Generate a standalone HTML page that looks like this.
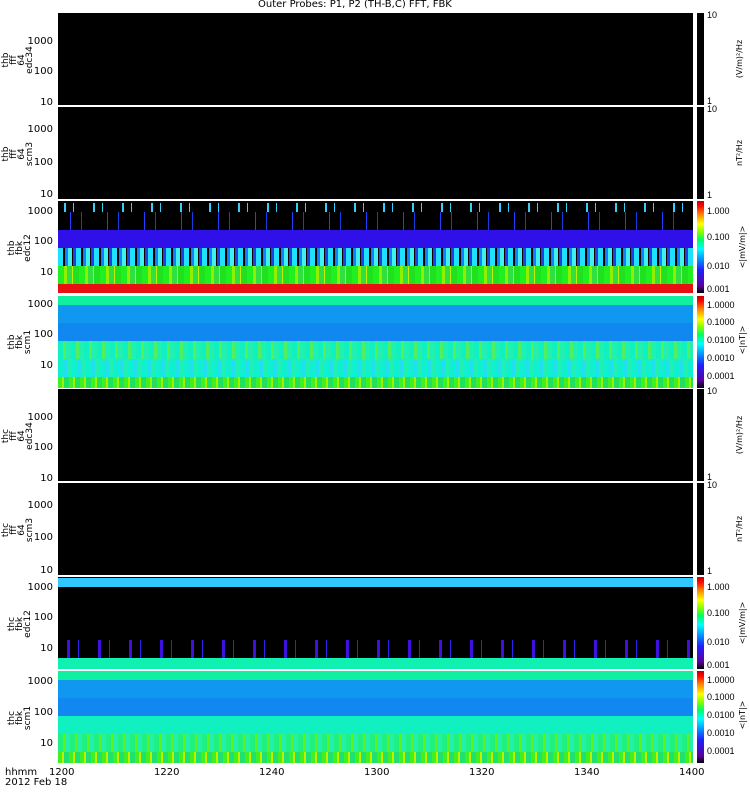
<!DOCTYPE html>
<html><head><meta charset="utf-8"><style>
body{margin:0;width:750px;height:800px;background:#fff;position:relative;overflow:hidden;font-family:"DejaVu Sans","Liberation Sans",sans-serif;font-size:10px;color:#000}
.p{position:absolute;left:58px;width:635px;height:92px;background:#000;overflow:hidden}
.b{position:absolute;left:0;width:100%}
.cb{position:absolute;left:697px;width:7px;height:92px;background:#000}
.g{background:linear-gradient(to top,#000 0%,#5a00a0 8%,#2020ff 25%,#00a0ff 38%,#00ffff 48%,#00ff60 58%,#80ff00 66%,#ffff00 75%,#ff8000 86%,#ff0000 95%,#c00000 100%)}
.t{position:absolute;font-size:10px;line-height:10px}
.yl{position:absolute;text-align:right;width:50px;left:3px;font-size:10px;line-height:10px}
.rl{position:absolute;transform:rotate(-90deg);transform-origin:left top;font-size:9px;line-height:8px;text-align:center;width:80px}
.ul{position:absolute;transform:rotate(-90deg);transform-origin:left top;font-size:8px;line-height:9px;width:92px;text-align:center}
.cl{position:absolute;left:707px;font-family:"Liberation Sans",sans-serif;font-size:9px;line-height:9px}
</style></head><body>
<div class="t" style="left:258px;top:0">Outer Probes: P1, P2 (TH-B,C) FFT, FBK</div>

<div class="p" style="top:13px"></div>
<div class="p" style="top:107px"></div>
<div class="p" style="top:201px">
 <div class="b" style="top:2px;height:9px;background:repeating-linear-gradient(90deg,#000 0 6px,#30d0ff 6px 8px,#000 8px 15px,#30d0ff 15px 16px,#000 16px 29px)"></div>
 <div class="b" style="top:11px;height:18px;background:repeating-linear-gradient(90deg,#000 0 12px,#2040ff 12px 13px,#000 13px 23px,#1040e0 23px 24px,#000 24px 37px)"></div>
 <div class="b" style="top:29px;height:18px;background:#3010e8"></div>
 <div class="b" style="top:47px;height:18px;background:repeating-linear-gradient(90deg,#20e0ff 0 5px,#000 5px 7px,#1080ff 7px 10px,#40f0f0 10px 14px,#000 14px 15px,#2040e0 15px 18px)"></div>
 <div class="b" style="top:65px;height:18px;background:repeating-linear-gradient(90deg,#20f020 0 6px,#90f000 6px 9px,#30e040 9px 14px,#c0f000 14px 15px,#20e020 15px 21px)"></div>
 <div class="b" style="top:83px;height:9px;background:#e81010"></div>
</div>
<div class="p" style="top:296px">
 <div class="b" style="top:0;height:9px;background:#10f0a0"></div>
 <div class="b" style="top:9px;height:18px;background:#1098f0"></div>
 <div class="b" style="top:27px;height:18px;background:#1088f0"></div>
 <div class="b" style="top:45px;height:18px;background:repeating-linear-gradient(90deg,#10f0c0 0 5px,#50f060 5px 8px,#20f0b0 8px 13px)"></div>
 <div class="b" style="top:63px;height:18px;background:repeating-linear-gradient(90deg,#10f0d0 0 6px,#20e0f0 6px 9px,#20f0b0 9px 14px)"></div>
 <div class="b" style="top:81px;height:11px;background:repeating-linear-gradient(90deg,#40f020 0 4px,#a0f000 4px 6px,#20e060 6px 11px)"></div>
</div>
<div class="p" style="top:389px"></div>
<div class="p" style="top:483px"></div>
<div class="p" style="top:577px">
 <div class="b" style="top:1px;height:9px;background:#30c8ff"></div>
 <div class="b" style="top:63px;height:18px;background:repeating-linear-gradient(90deg,#000 0 9px,#4010e0 9px 12px,#000 12px 20px,#3020f0 20px 21px,#000 21px 31px)"></div>
 <div class="b" style="top:81px;height:11px;background:#10f0b0"></div>
</div>
<div class="p" style="top:671px">
 <div class="b" style="top:0;height:9px;background:#10f0a0"></div>
 <div class="b" style="top:9px;height:18px;background:#1098f0"></div>
 <div class="b" style="top:27px;height:18px;background:#1088f0"></div>
 <div class="b" style="top:45px;height:18px;background:#10f0c0"></div>
 <div class="b" style="top:63px;height:18px;background:repeating-linear-gradient(90deg,#20f080 0 5px,#60f020 5px 7px,#20f0b0 7px 12px)"></div>
 <div class="b" style="top:81px;height:11px;background:repeating-linear-gradient(90deg,#40f020 0 4px,#c0f000 4px 6px,#20e070 6px 11px)"></div>
</div>

<div class="yl" style="top:37px">1000</div><div class="yl" style="top:67px">100</div><div class="yl" style="top:98px">10</div>
<div class="yl" style="top:125px">1000</div><div class="yl" style="top:158px">100</div><div class="yl" style="top:190px">10</div>
<div class="yl" style="top:207px">1000</div><div class="yl" style="top:237px">100</div><div class="yl" style="top:268px">10</div>
<div class="yl" style="top:300px">1000</div><div class="yl" style="top:330px">100</div><div class="yl" style="top:361px">10</div>
<div class="yl" style="top:413px">1000</div><div class="yl" style="top:443px">100</div><div class="yl" style="top:474px">10</div>
<div class="yl" style="top:501px">1000</div><div class="yl" style="top:533px">100</div><div class="yl" style="top:566px">10</div>
<div class="yl" style="top:583px">1000</div><div class="yl" style="top:613px">100</div><div class="yl" style="top:644px">10</div>
<div class="yl" style="top:677px">1000</div><div class="yl" style="top:708px">100</div><div class="yl" style="top:739px">10</div>

<div class="rl" style="left:2px;top:100px">thb<br>fff<br>64<br>edc34</div>
<div class="rl" style="left:2px;top:194px">thb<br>fff<br>64<br>scm3</div>
<div class="rl" style="left:8px;top:288px">thb<br>fbk<br>edc12</div>
<div class="rl" style="left:8px;top:382px">thb<br>fbk<br>scm1</div>
<div class="rl" style="left:2px;top:476px">thc<br>fff<br>64<br>edc34</div>
<div class="rl" style="left:2px;top:570px">thc<br>fff<br>64<br>scm3</div>
<div class="rl" style="left:8px;top:664px">thc<br>fbk<br>edc12</div>
<div class="rl" style="left:8px;top:758px">thc<br>fbk<br>scm1</div>

<div class="cb" style="top:13px"></div><div class="cl" style="top:11px">10</div><div class="cl" style="top:97px">1</div>
<div class="ul" style="left:735px;top:105px">(V/m)²/Hz</div>
<div class="cb" style="top:107px"></div><div class="cl" style="top:105px">10</div><div class="cl" style="top:191px">1</div>
<div class="ul" style="left:735px;top:199px">nT²/Hz</div>
<div class="cb g" style="top:201px"></div><div class="cl" style="top:207px">1.000</div><div class="cl" style="top:233px">0.100</div><div class="cl" style="top:262px">0.010</div><div class="cl" style="top:285px">0.001</div>
<div class="ul" style="left:738px;top:293px">&lt;|mV/m|&gt;</div>
<div class="cb g" style="top:296px"></div><div class="cl" style="top:301px">1.0000</div><div class="cl" style="top:318px">0.1000</div><div class="cl" style="top:336px">0.0100</div><div class="cl" style="top:354px">0.0010</div><div class="cl" style="top:372px">0.0001</div>
<div class="ul" style="left:738px;top:386px">&lt;|nT|&gt;</div>
<div class="cb" style="top:389px"></div><div class="cl" style="top:387px">10</div><div class="cl" style="top:473px">1</div>
<div class="ul" style="left:735px;top:481px">(V/m)²/Hz</div>
<div class="cb" style="top:483px"></div><div class="cl" style="top:481px">10</div><div class="cl" style="top:567px">1</div>
<div class="ul" style="left:735px;top:575px">nT²/Hz</div>
<div class="cb g" style="top:577px"></div><div class="cl" style="top:583px">1.000</div><div class="cl" style="top:609px">0.100</div><div class="cl" style="top:638px">0.010</div><div class="cl" style="top:661px">0.001</div>
<div class="ul" style="left:738px;top:669px">&lt;|mV/m|&gt;</div>
<div class="cb g" style="top:671px"></div><div class="cl" style="top:676px">1.0000</div><div class="cl" style="top:693px">0.1000</div><div class="cl" style="top:711px">0.0100</div><div class="cl" style="top:729px">0.0010</div><div class="cl" style="top:747px">0.0001</div>
<div class="ul" style="left:738px;top:761px">&lt;|nT|&gt;</div>

<div class="t" style="left:5px;top:768px">hhmm</div>
<div class="t" style="left:5px;top:778px">2012 Feb 18</div>
<div class="t" style="left:49px;top:768px">1200</div>
<div class="t" style="left:154px;top:768px">1220</div>
<div class="t" style="left:259px;top:768px">1240</div>
<div class="t" style="left:364px;top:768px">1300</div>
<div class="t" style="left:469px;top:768px">1320</div>
<div class="t" style="left:574px;top:768px">1340</div>
<div class="t" style="left:679px;top:768px">1400</div>
</body></html>
